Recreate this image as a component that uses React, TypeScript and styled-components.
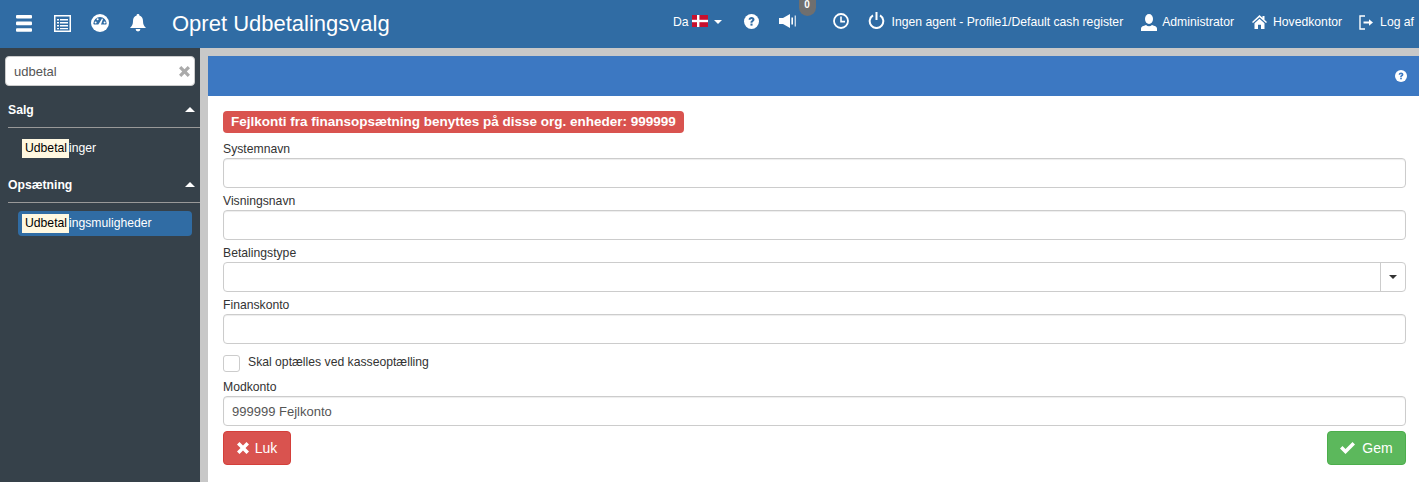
import React from "react";
import styled, { createGlobalStyle } from "styled-components";

const GlobalStyle = createGlobalStyle`
  html, body {
    margin: 0;
    height: 100%;
    background: #fff;
    font-family: "Liberation Sans", Arial, sans-serif;
    font-size: 12.2px;
    color: #333;
  }
  * { box-sizing: border-box; }
`;

const Page = styled.div`
  width: 1419px;
  height: 482px;
  display: flex;
  flex-direction: column;
  overflow: hidden;
`;

const TopBar = styled.header`
  height: 48px;
  flex: none;
  background: #306ca4;
  color: #fff;
  display: flex;
  justify-content: space-between;
  align-items: center;
`;

const LeftGroup = styled.div`
  display: flex;
  align-items: center;
  padding: 0 0 2px 16px;
`;

const RightGroup = styled.div`
  display: flex;
  align-items: center;
  padding: 0 5px 4px 0;
`;

const IconSlot = styled.span<{ $w: number; $ml?: number; $pb?: number }>`
  width: ${(p) => p.$w}px;
  margin-left: ${(p) => p.$ml ?? 0}px;
  height: 20px;
  flex: none;
  padding-bottom: ${(p) => p.$pb ?? 0}px;
  display: flex;
  align-items: center;
  justify-content: center;
  svg { display: block; }
`;

const PageTitle = styled.h1`
  margin: 0 0 0 26px;
  padding-top: 2px;
  font-size: 22px;
  font-weight: 400;
  line-height: 46px;
`;

const TopText = styled.span<{ $ml?: number }>`
  margin-left: ${(p) => p.$ml ?? 0}px;
  font-size: 12.2px;
  white-space: nowrap;
`;

const Caret = styled.span<{ $ml?: number; $color?: string }>`
  display: inline-block;
  margin-left: ${(p) => p.$ml ?? 0}px;
  border-top: 4px solid ${(p) => p.$color ?? "#fff"};
  border-left: 4px solid transparent;
  border-right: 4px solid transparent;
`;

const SpeakerWrap = styled.span`
  position: relative;
  display: flex;
  margin-left: 19px;
  width: 18px;
  height: 20px;
  padding-bottom: 3px;
  align-items: center;
`;

const CountBadge = styled.span`
  position: absolute;
  top: -20px;
  left: 20px;
  width: 17px;
  height: 24px;
  border-radius: 9px;
  padding-top: 8px;
  background: #6f6f6f;
  color: #fff;
  font-size: 10px;
  font-weight: 700;
  line-height: 10px;
  text-align: center;
`;

const Body = styled.div`
  flex: 1;
  display: flex;
  min-height: 0;
`;

const Sidebar = styled.aside`
  width: 200px;
  flex: none;
  background: #36414a;
  padding: 8px 0 0 5px;
  color: #fff;
`;

const SearchBox = styled.div`
  width: 190px;
  height: 30px;
  background: #fff;
  border: 1px solid #ccc;
  border-radius: 4px;
  display: flex;
  align-items: center;
  justify-content: space-between;
  padding: 0 4px 0 8px;
  font-size: 13px;
  color: #555;
`;

const SectionHead = styled.div<{ $mt: number }>`
  margin: ${(p) => p.$mt}px 0 0 3px;
  height: 32px;
  padding: 0 5px 4px 0;
  border-bottom: 1px solid #999;
  display: flex;
  align-items: center;
  justify-content: space-between;
  font-size: 12.2px;
  font-weight: 700;
`;

const UpCaret = styled.span`
  border-bottom: 5px solid #fff;
  border-left: 5px solid transparent;
  border-right: 5px solid transparent;
`;

const MenuItem = styled.div<{ $active?: boolean; $mt: number }>`
  width: 174px;
  height: 25px;
  margin: ${(p) => p.$mt}px 0 0 13px;
  padding: 0 0 1px 4px;
  border-radius: 4px;
  background: ${(p) => (p.$active ? "#306ca4" : "transparent")};
  display: flex;
  align-items: center;
  font-size: 12.2px;
`;

const Match = styled.mark`
  background: #fff8e1;
  color: #000;
  padding: 0 2px 0 3px;
  line-height: 19px;
`;

const Content = styled.main`
  flex: 1;
  min-width: 0;
  background: #fff;
  border-left: 8px solid #c8c8c8;
  border-top: 8px solid #c8c8c8;
`;

const PanelHead = styled.div`
  height: 40px;
  background: #3c78c2;
  display: flex;
  align-items: center;
  justify-content: flex-end;
  padding-right: 12px;
`;

const Form = styled.form`
  padding: 15px 13px 0 15px;
`;

const AlertLabel = styled.div`
  width: fit-content;
  height: 22px;
  margin-bottom: 3px;
  padding: 0 8px;
  border-radius: 4px;
  background: #d9534f;
  color: #fff;
  font-size: 13.5px;
  font-weight: 700;
  line-height: 22px;
`;

const Field = styled.div`
  display: flex;
  flex-direction: column;
`;

const Label = styled.label`
  height: 22px;
  padding-top: 6px;
  font-size: 12.2px;
  line-height: 14px;
`;

const TextBox = styled.div`
  height: 30px;
  border: 1px solid #ccc;
  border-radius: 4px;
  padding: 0 8px;
  font-size: 13px;
  line-height: 29px;
  color: #555;
  box-shadow: inset 0 1px 1px rgba(0, 0, 0, 0.075);
`;

const SelectBox = styled.div`
  height: 30px;
  border: 1px solid #ccc;
  border-radius: 4px;
  display: flex;
  justify-content: flex-end;
`;

const SelectToggle = styled.span`
  width: 25px;
  border-left: 1px solid #ccc;
  display: flex;
  align-items: center;
  justify-content: center;
`;

const CheckRow = styled.div`
  margin: 10px 0 2px;
  height: 18px;
  display: flex;
  align-items: center;
  gap: 8px;
  font-size: 12.2px;
`;

const CheckBox = styled.span`
  width: 17px;
  height: 17px;
  border: 1px solid #ccc;
  border-radius: 3px;
  background: #fff;
`;

const CheckText = styled.span`
  margin-bottom: 2px;
`;

const Buttons = styled.div`
  margin-top: 5px;
  display: flex;
  justify-content: space-between;
`;

const Button = styled.button<{ $bg: string; $border: string; $w: number; $gap: number }>`
  width: ${(p) => p.$w}px;
  height: 34px;
  padding: 0;
  border: 1px solid ${(p) => p.$border};
  border-radius: 4px;
  background: ${(p) => p.$bg};
  color: #fff;
  font-family: inherit;
  font-size: 14px;
  display: flex;
  align-items: center;
  justify-content: center;
  gap: ${(p) => p.$gap}px;
`;

const Help = ({ size, ink }: { size: number; ink: string }) => (
  <svg width={size} height={size} viewBox="0 0 16 16">
    <circle cx="8" cy="8" r="8" fill="#fff" />
    <path d="M4.900 6.200C5 4.400 6.300 3.300 8.100 3.300c1.800 0 3.100 1.100 3.100 2.600 0 1.200-.7 1.800-1.500 2.300-.5.300-.7.600-.7 1.200H6.900c0-1.300.4-1.900 1.200-2.400.5-.3.800-.6.800-1 0-.5-.4-.8-.9-.8-.6 0-1 .4-1.100 1z" fill={ink} />
    <rect x="6.900" y="10.200" width="2.200" height="2.200" fill={ink} />
  </svg>
);

const Hamburger = () => (
  <svg width="16" height="17" viewBox="0 0 16 17" fill="#fff">
    <rect y="0" width="16" height="3.600" rx="1" />
    <rect y="6.600" width="16" height="3.600" rx="1" />
    <rect y="13.200" width="16" height="3.600" rx="1" />
  </svg>
);

const ListAlt = () => (
  <svg width="17" height="17" viewBox="0 0 17 17">
    <rect x=".75" y=".75" width="15.500" height="15.500" fill="none" stroke="#fff" strokeWidth="1.500" />
    <path d="M3 4h2v1.600H3zM6 4h8v1.600H6zM3 7h2v1.600H3zM6 7h8v1.600H6zM3 10h2v1.600H3zM6 10h8v1.600H6zM3 13h2v1.300H3zM6 13h8v1.300H6z" fill="#fff" />
  </svg>
);

const Dashboard = () => (
  <svg width="18" height="18" viewBox="0 0 18 18">
    <circle cx="9" cy="9" r="9" fill="#fff" />
    <path d="M2.400 9.600a6.600 6.600 0 0 1 13.200 0c0 .6-.4 1-1 1H3.400c-.6 0-1-.4-1-1z" fill="#306ca4" />
    <path d="M8 9.500 11 4.500l1 .5-2 5.500a1.300 1.300 0 1 1-2-1z" fill="#fff" />
    <circle cx="4.600" cy="8.400" r="1" fill="#fff" />
    <circle cx="6.600" cy="5.200" r="1" fill="#fff" />
    <circle cx="13.600" cy="8.400" r="1" fill="#fff" />
  </svg>
);

const Bell = () => (
  <svg width="16" height="18" viewBox="0 0 16 18" fill="#fff">
    <path d="M8 0a1.300 1.300 0 0 1 1.300 1.600C11.800 2.200 13 4.200 13 7c0 3.400.9 5 3 7H0c2.100-2 3-3.600 3-7 0-2.800 1.200-4.800 3.700-5.400A1.300 1.300 0 0 1 8 0z" />
    <path d="M5.600 15h4.800a2.400 2.400 0 0 1-4.800 0z" />
  </svg>
);

const Flag = () => (
  <svg width="16" height="12" viewBox="0 0 16 12">
    <rect width="16" height="12" fill="#c8102e" />
    <rect x="5" width="2.400" height="12" fill="#fff" />
    <rect y="4.800" width="16" height="2.400" fill="#fff" />
  </svg>
);

const Speaker = () => (
  <svg width="18" height="14" viewBox="0 0 18 14" fill="#fff">
    <path d="M0 4h4l7-4v14l-7-4H0z" />
    <rect x="12.400" y="3.500" width="1.600" height="7" />
    <rect x="15.600" y="1.500" width="1.400" height="11" opacity=".75" />
  </svg>
);

const Clock = () => (
  <svg width="16" height="16" viewBox="0 0 16 16" fill="none" stroke="#fff">
    <circle cx="8" cy="8" r="7" strokeWidth="1.800" />
    <path d="M8 3.600V8.600H12" strokeWidth="1.600" />
  </svg>
);

const Power = () => (
  <svg width="17" height="17" viewBox="0 0 17 17" fill="none" stroke="#fff" strokeWidth="2">
    <path d="M5 3.400a6.800 6.800 0 1 0 7 0" />
    <path d="M8.500 0v8" />
  </svg>
);

const User = () => (
  <svg width="16" height="17" viewBox="0 0 16 17" fill="#fff">
    <ellipse cx="8" cy="5" rx="4" ry="5" />
    <path d="M0 17v-2.500c0-2 2.400-2.600 5-3.500.9.800 1.900 1.200 3 1.200s2.100-.4 3-1.200c2.600.9 5 1.500 5 3.500V17z" />
  </svg>
);

const Home = () => (
  <svg width="15" height="14" viewBox="0 0 15 14" fill="#fff">
    <path d="M7.500 0 10.500 2.800V1H12.500V4.700L15 7.100 14 8 7.500 2.300 1 8 0 7.100z" />
    <path d="M2.500 8.200 7.500 3.800 12.500 8.200V14H9V9.800H6V14H2.500z" />
  </svg>
);

const LogOut = () => (
  <svg width="15" height="15" viewBox="0 0 15 15" fill="none" stroke="#fff">
    <path d="M6 1H1v13h5" strokeWidth="1.400" />
    <path d="M4.500 7.500H11" strokeWidth="2" />
    <path d="M10 4.200 14 7.500 10 10.800z" fill="#fff" strokeWidth="0" />
  </svg>
);

const Cross = ({ size, color }: { size: number; color: string }) => (
  <svg width={size} height={size} viewBox="0 0 12 12">
    <path d="M2.500 0 6 3.500 9.500 0 12 2.500 8.500 6 12 9.500 9.500 12 6 8.500 2.500 12 0 9.500 3.500 6 0 2.500z" fill={color} />
  </svg>
);

const Check = () => (
  <svg width="15" height="12" viewBox="0 0 15 12">
    <path d="M0 6.500 2.500 4l3 3L12.500 0 15 2.500 5.500 12z" fill="#fff" />
  </svg>
);

const TextField = ({ label, value }: { label: string; value?: string }) => (
  <Field>
    <Label>{label}</Label>
    <TextBox>{value}</TextBox>
  </Field>
);

export default function App() {
  return (
    <Page>
      <GlobalStyle />
      <TopBar>
        <LeftGroup>
          <IconSlot $w={16}><Hamburger /></IconSlot>
          <IconSlot $w={17} $ml={22}><ListAlt /></IconSlot>
          <IconSlot $w={18} $ml={20}><Dashboard /></IconSlot>
          <IconSlot $w={16} $ml={21}><Bell /></IconSlot>
          <PageTitle>Opret Udbetalingsvalg</PageTitle>
        </LeftGroup>
        <RightGroup>
          <TopText>Da</TopText>
          <IconSlot $w={16} $ml={3} $pb={2}><Flag /></IconSlot>
          <Caret $ml={6} />
          <IconSlot $w={16} $ml={22} $pb={2}><Help size={15} ink="#306ca4" /></IconSlot>
          <SpeakerWrap>
            <Speaker />
            <CountBadge>0</CountBadge>
          </SpeakerWrap>
          <IconSlot $w={16} $ml={36} $pb={2}><Clock /></IconSlot>
          <IconSlot $w={17} $ml={19} $pb={3}><Power /></IconSlot>
          <TopText $ml={7}>Ingen agent - Profile1/Default cash register</TopText>
          <IconSlot $w={16} $ml={18}><User /></IconSlot>
          <TopText $ml={5}>Administrator</TopText>
          <IconSlot $w={15} $ml={18}><Home /></IconSlot>
          <TopText $ml={6}>Hovedkontor</TopText>
          <IconSlot $w={15} $ml={17}><LogOut /></IconSlot>
          <TopText $ml={6}>Log af</TopText>
        </RightGroup>
      </TopBar>
      <Body>
        <Sidebar>
          <SearchBox>
            udbetal
            <Cross size={11} color="#aaa" />
          </SearchBox>
          <SectionHead $mt={10}>
            Salg
            <UpCaret />
          </SectionHead>
          <MenuItem $mt={8}>
            <Match>Udbetal</Match>inger
          </MenuItem>
          <SectionHead $mt={10}>
            Opsætning
            <UpCaret />
          </SectionHead>
          <MenuItem $active $mt={8}>
            <Match>Udbetal</Match>ingsmuligheder
          </MenuItem>
        </Sidebar>
        <Content>
          <PanelHead>
            <Help size={12} ink="#3c78c2" />
          </PanelHead>
          <Form>
            <AlertLabel>Fejlkonti fra finansopsætning benyttes på disse org. enheder: 999999</AlertLabel>
            <TextField label="Systemnavn" />
            <TextField label="Visningsnavn" />
            <Field>
              <Label>Betalingstype</Label>
              <SelectBox>
                <SelectToggle>
                  <Caret $color="#333" />
                </SelectToggle>
              </SelectBox>
            </Field>
            <TextField label="Finanskonto" />
            <CheckRow>
              <CheckBox />
              <CheckText>Skal optælles ved kasseoptælling</CheckText>
            </CheckRow>
            <TextField label="Modkonto" value="999999 Fejlkonto" />
            <Buttons>
              <Button type="button" $bg="#d9534f" $border="#d43f3a" $w={68} $gap={6}>
                <Cross size={12} color="#fff" />
                Luk
              </Button>
              <Button type="button" $bg="#5cb85c" $border="#4cae4c" $w={79} $gap={7}>
                <Check />
                Gem
              </Button>
            </Buttons>
          </Form>
        </Content>
      </Body>
    </Page>
  );
}
